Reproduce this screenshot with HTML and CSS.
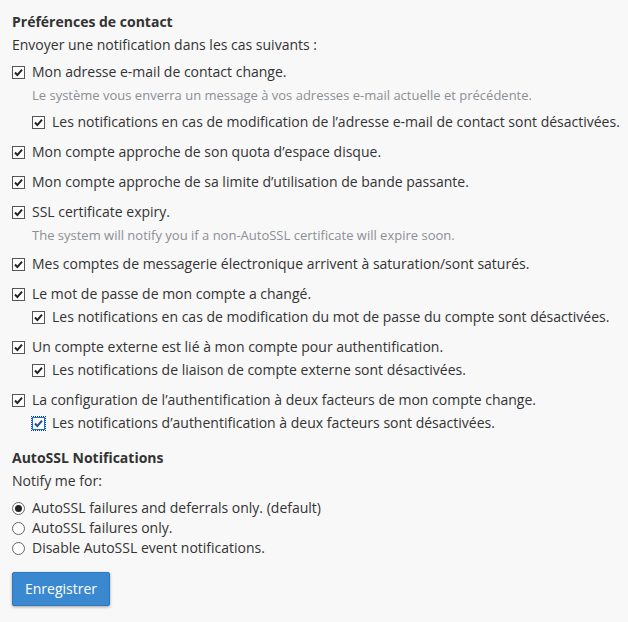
FILE: index.html
```html
<!DOCTYPE html>
<html lang="fr">
<head>
  <meta charset="UTF-8" />
  <title>Préférences de contact</title>
  <link rel="stylesheet" href="styles.css">
</head>
<body>
  <form class="prefs">

    <!-- Préférences de contact -->
    <h3 class="section-title">Préférences de contact</h3>
    <p class="intro">Envoyer une notification dans les cas suivants :</p>

    <div class="group">
      <label class="row"><svg class="cb" viewBox="0 0 13 13"><rect x="0.5" y="0.5" width="12" height="12"/><path d="M3 6.5l2.4 2.6L10 3.6"/></svg>Mon adresse e-mail de contact change.</label>
      <p class="help">Le système vous enverra un message à vos adresses e-mail actuelle et précédente.</p>
      <label class="row sub after-help"><svg class="cb" viewBox="0 0 13 13"><rect x="0.5" y="0.5" width="12" height="12"/><path d="M3 6.5l2.4 2.6L10 3.6"/></svg>Les notifications en cas de modification de l’adresse e-mail de contact sont désactivées.</label>
    </div>

    <div class="group">
      <label class="row"><svg class="cb" viewBox="0 0 13 13"><rect x="0.5" y="0.5" width="12" height="12"/><path d="M3 6.5l2.4 2.6L10 3.6"/></svg>Mon compte approche de son quota d’espace disque.</label>
    </div>

    <div class="group">
      <label class="row"><svg class="cb" viewBox="0 0 13 13"><rect x="0.5" y="0.5" width="12" height="12"/><path d="M3 6.5l2.4 2.6L10 3.6"/></svg>Mon compte approche de sa limite d’utilisation de bande passante.</label>
    </div>

    <div class="group">
      <label class="row"><svg class="cb" viewBox="0 0 13 13"><rect x="0.5" y="0.5" width="12" height="12"/><path d="M3 6.5l2.4 2.6L10 3.6"/></svg>SSL certificate expiry.</label>
      <p class="help">The system will notify you if a non-AutoSSL certificate will expire soon.</p>
    </div>

    <div class="group">
      <label class="row"><svg class="cb" viewBox="0 0 13 13"><rect x="0.5" y="0.5" width="12" height="12"/><path d="M3 6.5l2.4 2.6L10 3.6"/></svg>Mes comptes de messagerie électronique arrivent à saturation/sont saturés.</label>
    </div>

    <div class="group">
      <label class="row"><svg class="cb" viewBox="0 0 13 13"><rect x="0.5" y="0.5" width="12" height="12"/><path d="M3 6.5l2.4 2.6L10 3.6"/></svg>Le mot de passe de mon compte a changé.</label>
      <label class="row sub"><svg class="cb" viewBox="0 0 13 13"><rect x="0.5" y="0.5" width="12" height="12"/><path d="M3 6.5l2.4 2.6L10 3.6"/></svg>Les notifications en cas de modification du mot de passe du compte sont désactivées.</label>
    </div>

    <div class="group">
      <label class="row"><svg class="cb" viewBox="0 0 13 13"><rect x="0.5" y="0.5" width="12" height="12"/><path d="M3 6.5l2.4 2.6L10 3.6"/></svg>Un compte externe est lié à mon compte pour authentification.</label>
      <label class="row sub"><svg class="cb" viewBox="0 0 13 13"><rect x="0.5" y="0.5" width="12" height="12"/><path d="M3 6.5l2.4 2.6L10 3.6"/></svg>Les notifications de liaison de compte externe sont désactivées.</label>
    </div>

    <div class="group">
      <label class="row"><svg class="cb" viewBox="0 0 13 13"><rect x="0.5" y="0.5" width="12" height="12"/><path d="M3 6.5l2.4 2.6L10 3.6"/></svg>La configuration de l’authentification à deux facteurs de mon compte change.</label>
      <label class="row sub"><svg class="cb focused" viewBox="0 0 13 13"><rect x="0.5" y="0.5" width="12" height="12"/><path d="M3 6.5l2.4 2.6L10 3.6"/></svg>Les notifications d’authentification à deux facteurs sont désactivées.</label>
    </div>

    <!-- AutoSSL -->
    <h3 class="section-title autossl">AutoSSL Notifications</h3>
    <p class="intro">Notify me for:</p>

    <div class="radios">
      <label class="radio"><span class="rb checked"></span>AutoSSL failures and deferrals only. (default)</label>
      <label class="radio"><span class="rb"></span>AutoSSL failures only.</label>
      <label class="radio"><span class="rb"></span>Disable AutoSSL event notifications.</label>
    </div>

    <button type="button" class="btn-primary">Enregistrer</button>
  </form>
</body>
</html>
```

FILE: styles.css
```css
/* Base */
html, body {
  margin: 0;
  padding: 0;
}

body {
  background: #f8f8f8;
  color: #333;
  font-family: 'Open Sans', 'Liberation Sans', sans-serif;
  font-size: 14px;
  line-height: 20px;
}

.prefs {
  padding: 12px;
}

/* Titres */
.section-title {
  margin: 0 0 3px 0;
  font-size: 14px;
  font-weight: 700;
  line-height: 20px;
}
.section-title.autossl {
  margin-top: 15px;
}

.intro {
  margin: 0 0 7px 0;
}

/* Groupes de cases à cocher */
.group {
  margin-bottom: 10px;
}

.row {
  display: flex;
  align-items: center;
  gap: 7px;
  white-space: nowrap;
}
.row.sub {
  margin-top: 3px;
  margin-left: 20px;
}
.row.after-help {
  margin-top: 8px;
}

.cb {
  width: 13px;
  height: 13px;
  flex: none;
}
.cb rect {
  fill: #fff;
  stroke: #555;
  stroke-width: 1;
}
.cb path {
  fill: none;
  stroke: #222;
  stroke-width: 2;
}
.cb.focused {
  outline: 1px dotted #0b3d91;
  outline-offset: 0;
}
.cb.focused rect {
  stroke: #1a6fd1;
}
.cb.focused path {
  stroke: #1c4f8f;
}

.help {
  margin: 4px 0 0 20px;
  font-size: 13px;
  line-height: 18px;
  color: #8c8f94;
  white-space: nowrap;
}

/* Boutons radio */
.radios {
  margin-top: 0;
}
.radio {
  display: flex;
  align-items: center;
  gap: 7px;
  height: 20px;
}
.rb {
  box-sizing: border-box;
  width: 13px;
  height: 13px;
  border: 1px solid #666;
  border-radius: 50%;
  background: #fff;
  flex: none;
  position: relative;
}
.rb.checked::after {
  content: "";
  position: absolute;
  top: 2px; left: 2px;
  width: 7px;
  height: 7px;
  border-radius: 50%;
  background: #222;
}

/* Bouton Enregistrer */
.btn-primary {
  margin-top: 14px;
  padding: 6px 12px;
  font-family: inherit;
  font-size: 14px;
  line-height: 20px;
  color: #fff;
  background-color: #3a89d0;
  border: 1px solid #2f78bb;
  border-radius: 2px;
  box-shadow: 0 1px 3px rgba(0,0,0,0.35);
  cursor: pointer;
}
```
